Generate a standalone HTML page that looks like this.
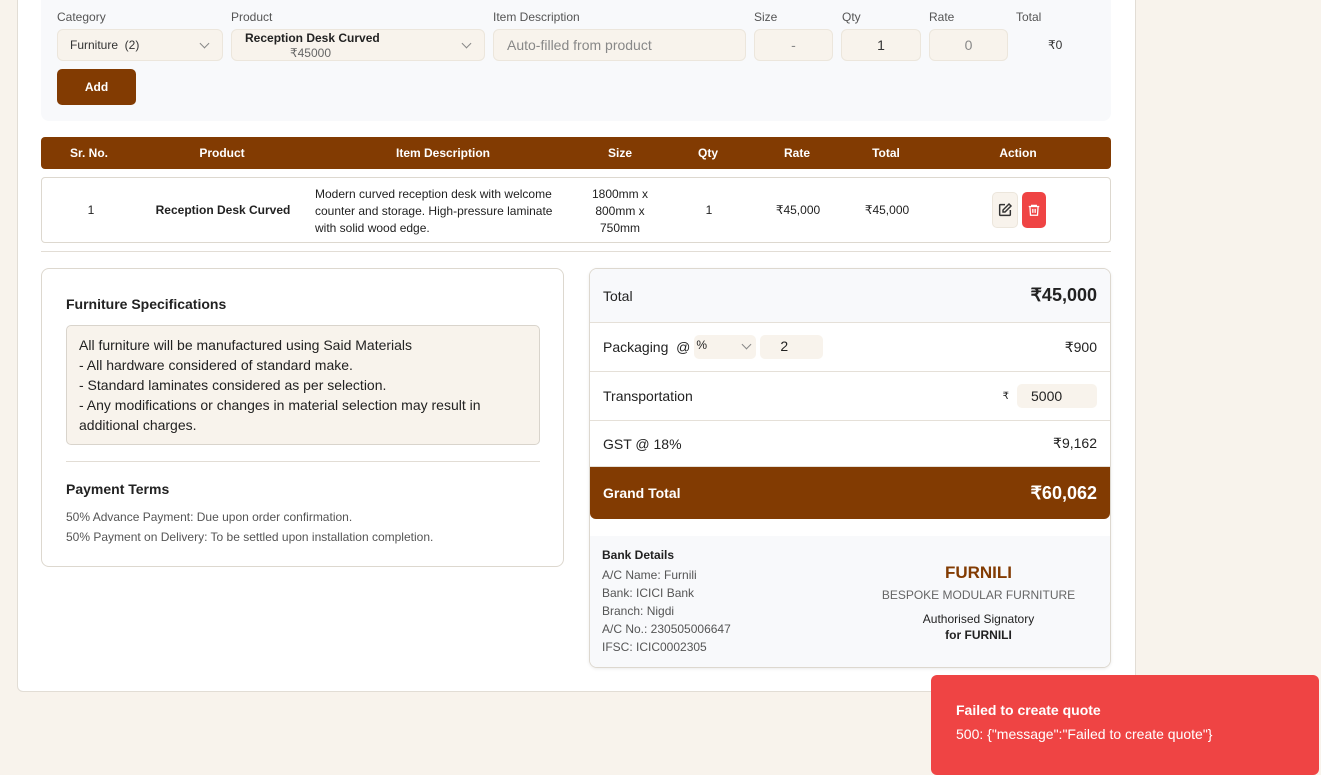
<!DOCTYPE html>
<html><head><meta charset="utf-8"><style>
*{box-sizing:border-box;margin:0;padding:0}
body{width:1321px;height:765px;background:#f8f3ec;font-family:"Liberation Sans",sans-serif;position:relative;overflow:hidden;color:#222}
.a{position:absolute}
.card{left:17px;top:-10px;width:1119px;height:702px;background:#fff;border:1px solid #e2ddd5;border-radius:6px}
.panel{left:41px;top:-10px;width:1070px;height:131px;background:#f8f9fb;border-radius:8px}
.lbl{font-size:12px;color:#555;top:10px}
.inp{top:29px;height:32px;background:#f8f3ec;border:1px solid #ece6dc;border-radius:6px;font-size:14px;color:#333;display:flex;align-items:center;justify-content:center}
.chev{position:absolute;right:14px;top:10px;width:7px;height:7px;border-right:1.3px solid #888;border-bottom:1.3px solid #888;transform:rotate(45deg)}
.th{top:137px;left:41px;width:1070px;height:32px;background:#823b02;border-radius:4px;color:#fff;font-weight:bold;font-size:12px}
.th span,.row span{position:absolute;transform:translateX(-50%);white-space:nowrap}
.row{top:177px;left:41px;width:1070px;height:66px;border:1px solid #ddd8cf;border-radius:4px;font-size:12px;color:#222}
.box{border:1px solid #ddd8cf;border-radius:8px;background:#fff}
.sr{position:absolute;left:0;width:100%;display:flex;align-items:center;padding:0 13px;border-bottom:1px solid #e5e0d8;font-size:14px;color:#222}
</style></head><body>
<div class="a card"></div>
<div class="a panel"></div>
<div class="a lbl" style="left:57px">Category</div>
<div class="a lbl" style="left:231px">Product</div>
<div class="a lbl" style="left:493px">Item Description</div>
<div class="a lbl" style="left:754px">Size</div>
<div class="a lbl" style="left:842px">Qty</div>
<div class="a lbl" style="left:929px">Rate</div>
<div class="a lbl" style="left:1016px">Total</div>
<div class="a inp" style="left:57px;width:166px;justify-content:flex-start;padding-left:12px;font-size:12px;color:#333">Furniture&nbsp;&nbsp;(2)<i class="chev"></i></div>
<div class="a inp" style="left:231px;width:254px;display:block;font-size:12px"><div style="position:absolute;left:13px;top:1px;font-weight:bold;color:#222;font-size:12px">Reception Desk Curved</div><div style="position:absolute;left:58px;top:16px;color:#666;font-size:12px">₹45000</div><i class="chev"></i></div>
<div class="a inp" style="left:493px;width:253px;justify-content:flex-start;padding-left:13px;color:#888">Auto-filled from product</div>
<div class="a inp" style="left:754px;width:79px;color:#888">-</div>
<div class="a inp" style="left:841px;width:80px">1</div>
<div class="a inp" style="left:929px;width:79px;color:#888">0</div>
<div class="a" style="left:1048px;top:38px;font-size:12px;color:#333">₹0</div>
<div class="a" style="left:57px;top:69px;width:79px;height:36px;background:#823b02;border-radius:5px;color:#fff;font-weight:bold;font-size:12px;display:flex;align-items:center;justify-content:center">Add</div>

<div class="a th"><div style="position:relative;top:9px">
<span style="left:48px">Sr. No.</span><span style="left:181px">Product</span><span style="left:402px">Item Description</span><span style="left:579px">Size</span><span style="left:667px">Qty</span><span style="left:756px">Rate</span><span style="left:845px">Total</span><span style="left:977px">Action</span></div></div>
<div class="a row">
<span style="left:49px;top:25px">1</span><span style="left:181px;top:25px;font-weight:600">Reception Desk Curved</span>
<div style="position:absolute;left:273px;top:8px;line-height:17px;width:262px">Modern curved reception desk with welcome counter and storage. High-pressure laminate with solid wood edge.</div>
<div style="position:absolute;left:538px;width:80px;top:8px;line-height:17px;text-align:center">1800mm x<br>800mm x<br>750mm</div>
<span style="left:667px;top:25px">1</span><span style="left:756px;top:25px">₹45,000</span><span style="left:845px;top:25px">₹45,000</span>
<div style="position:absolute;left:950px;top:14px;width:26px;height:36px;background:#f8f3ec;border:1px solid #ece6dc;border-radius:5px"><svg width="16" height="16" viewBox="0 0 24 24" style="position:absolute;left:4px;top:9px" fill="none" stroke="#333" stroke-width="2.2"><path d="M12 4H5a1 1 0 0 0-1 1v14a1 1 0 0 0 1 1h14a1 1 0 0 0 1-1v-7"/><path d="M18 3l3 3-9 9H9v-3z"/></svg></div>
<div style="position:absolute;left:980px;top:14px;width:24px;height:36px;background:#ef4444;border-radius:5px"><svg width="14" height="16" viewBox="0 0 24 24" style="position:absolute;left:5px;top:10px" fill="none" stroke="#fff" stroke-width="2.2"><path d="M3 6h18M8 6V4h8v2M5 6l1 15h12l1-15M10 10v7M14 10v7"/></svg></div>
</div>
<div class="a" style="left:41px;top:251px;width:1070px;height:1px;background:#e2ddd5"></div>

<div class="a box" style="left:41px;top:268px;width:523px;height:299px">
<div class="a" style="left:24px;top:27px;font-weight:bold;font-size:14px;color:#222">Furniture Specifications</div>
<div class="a" style="left:24px;top:56px;width:474px;height:120px;background:#f8f3ec;border:1px solid #d9d4cc;border-radius:5px;padding:9px 12px;font-size:14px;line-height:20px;color:#222">All furniture will be manufactured using Said Materials<br>- All hardware considered of standard make.<br>- Standard laminates considered as per selection.<br>- Any modifications or changes in material selection may result in additional charges.</div>
<div class="a" style="left:24px;top:192px;width:474px;height:1px;background:#e2ddd5"></div>
<div class="a" style="left:24px;top:212px;font-weight:bold;font-size:14px;color:#222">Payment Terms</div>
<div class="a" style="left:24px;top:238px;font-size:12px;line-height:20px;color:#555">50% Advance Payment: Due upon order confirmation.<br>50% Payment on Delivery: To be settled upon installation completion.</div>
</div>

<div class="a box" style="left:589px;top:268px;width:522px;height:400px;overflow:hidden;box-shadow:0 1px 3px rgba(0,0,0,.08)">
<div class="sr" style="top:0;height:54px;background:#f8f9fb;justify-content:space-between"><span>Total</span><b style="font-size:18px">₹45,000</b></div>
<div class="sr" style="top:54px;height:49px"><span>Packaging&nbsp;&nbsp;@</span><div style="margin-left:4px;width:62px;height:24px;background:#f8f3ec;border-radius:5px;position:relative;font-size:12px;padding:3px 2px">%<i class="chev" style="right:6px;top:6px"></i></div><div style="margin-left:4px;width:63px;height:24px;background:#f8f3ec;border-radius:5px;padding:3px 20px">2</div><span style="margin-left:auto">₹900</span></div>
<div class="sr" style="top:103px;height:49px"><span>Transportation</span><span style="margin-left:auto;font-size:10px;margin-right:8px">₹</span><div style="width:80px;height:24px;background:#f8f3ec;border-radius:5px;padding:4px 14px">5000</div></div>
<div class="sr" style="top:152px;height:46px;justify-content:space-between"><span>GST @ 18%</span><span>₹9,162</span></div>
<div class="sr" style="top:198px;height:52px;background:#823b02;color:#fff;justify-content:space-between;border:0;border-radius:0 0 6px 6px"><b>Grand Total</b><b style="font-size:18px">₹60,062</b></div>
<div class="a" style="left:0;top:267px;width:100%;height:133px;background:#f8f9fb"></div>
<div class="a" style="left:12px;top:279px;font-size:12px;font-weight:bold;color:#222">Bank Details</div>
<div class="a" style="left:12px;top:297px;font-size:12px;line-height:18px;color:#555">A/C Name: Furnili<br>Bank: ICICI Bank<br>Branch: Nigdi<br>A/C No.: 230505006647<br>IFSC: ICIC0002305</div>
<div class="a" style="left:270px;top:294px;width:237px;text-align:center"><div style="font-size:17px;font-weight:bold;color:#823b02">FURNILI</div><div style="font-size:12px;color:#666;margin-top:5px">BESPOKE MODULAR FURNITURE</div><div style="font-size:12px;color:#222;margin-top:10px">Authorised Signatory</div><div style="font-size:12px;color:#222;font-weight:bold;margin-top:2px">for FURNILI</div></div>
</div>

<div class="a" style="left:931px;top:675px;width:388px;height:100px;background:#ef4444;border-radius:6px;color:#fff;padding:27px 25px;font-size:14px">
<div style="font-weight:bold">Failed to create quote</div>
<div style="margin-top:8px">500: {"message":"Failed to create quote"}</div></div>
</body></html>
